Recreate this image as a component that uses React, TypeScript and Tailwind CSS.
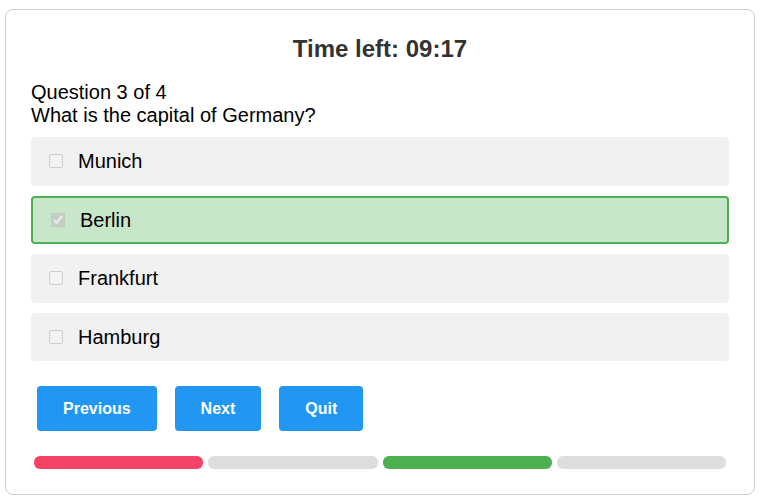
const options = [
  { label: "Munich", selected: false },
  { label: "Berlin", selected: true },
  { label: "Frankfurt", selected: false },
  { label: "Hamburg", selected: false },
];

const progress = ["bg-[#f44366]", "bg-[#dddddd]", "bg-[#4caf50]", "bg-[#dddddd]"];

export default function App() {
  return (
    <div className="min-h-[500px] bg-white pt-[9px] pl-[5px] font-['Liberation_Sans',Arial,sans-serif]">
      <div className="w-[750px] rounded-lg border border-[#cccccc] px-[25px] pt-[25px] pb-[25px]">
        <h2 className="text-center text-[24px] font-bold leading-[28px] text-[#333333]">Time left: 09:17</h2>

        <div className="mt-[18px] text-[20px] leading-[23px] text-black">
          <p>Question 3 of 4</p>
          <p>What is the capital of Germany?</p>
        </div>

        <div className="mt-[10px] flex flex-col gap-[10px]">
          {options.map((o) => (
            <label
              key={o.label}
              className={
                o.selected
                  ? "flex h-[48.5px] items-center gap-[15px] rounded-[4px] border-2 border-[#4caf50] bg-[#c8e6c9] pl-[18px] text-[20px] text-black"
                  : "flex h-[48.5px] items-center gap-[15px] rounded-[4px] bg-[#f1f1f1] pl-[18px] text-[20px] text-black"
              }
            >
              <input type="checkbox" disabled checked={o.selected} readOnly className="m-0 h-[14px] w-[14px]" />
              <span>{o.label}</span>
            </label>
          ))}
        </div>

        <div className="mt-[25px] ml-[6px] flex gap-[18px]">
          <button className="h-[45px] rounded-[4px] bg-[#2196f3] px-[26px] text-[16px] font-bold text-white">Previous</button>
          <button className="h-[45px] rounded-[4px] bg-[#2196f3] px-[26px] text-[16px] font-bold text-white">Next</button>
          <button className="h-[45px] rounded-[4px] bg-[#2196f3] px-[26px] text-[16px] font-bold text-white">Quit</button>
        </div>

        <div className="mt-[25px] mx-[3px] flex gap-[5px]">
          {progress.map((c, i) => (
            <div key={i} className={`h-[13px] flex-1 rounded-[6px] ${c}`} />
          ))}
        </div>
      </div>
    </div>
  );
}
